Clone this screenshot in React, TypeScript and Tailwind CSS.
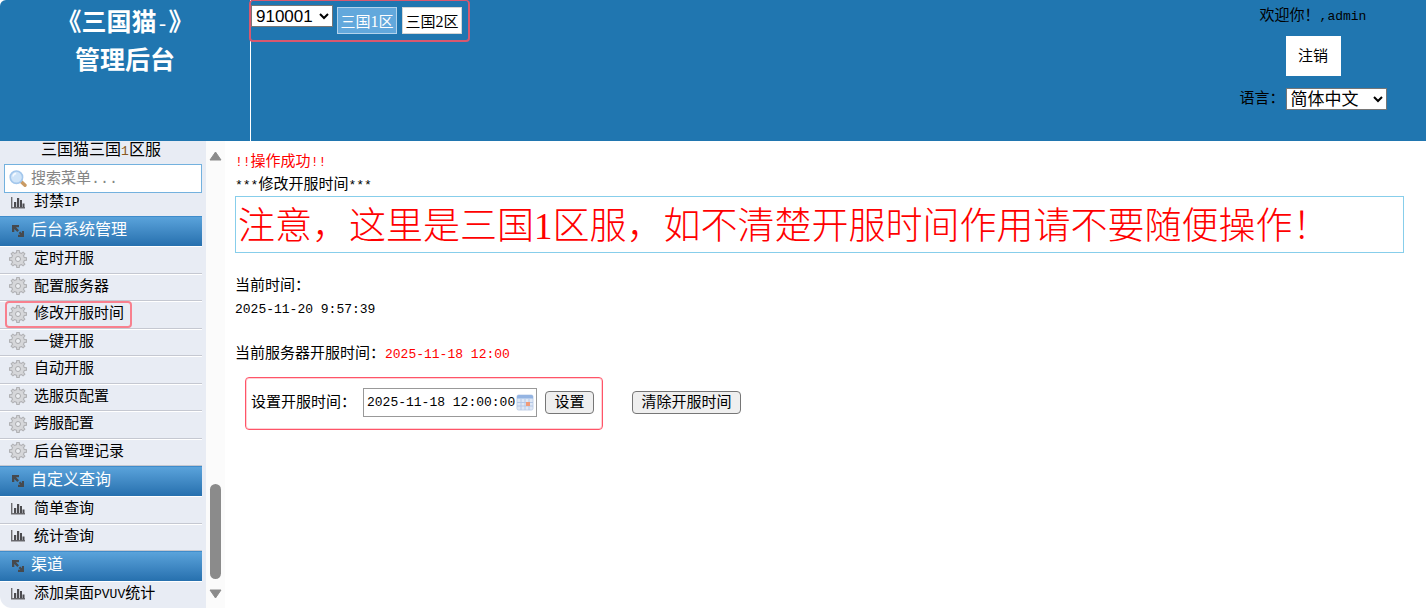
import React, { useState } from "react";

type IconKind = "chart" | "gear";

interface MenuItem {
  label: React.ReactNode;
  icon: IconKind;
  marked?: boolean;
}

interface MenuGroup {
  title: string;
  items: MenuItem[];
}

const groups: MenuGroup[] = [
  {
    title: "后台系统管理",
    items: [
      { label: "定时开服", icon: "gear" },
      { label: "配置服务器", icon: "gear" },
      { label: "修改开服时间", icon: "gear", marked: true },
      { label: "一键开服", icon: "gear" },
      { label: "自动开服", icon: "gear" },
      { label: "选服页配置", icon: "gear" },
      { label: "跨服配置", icon: "gear" },
      { label: "后台管理记录", icon: "gear" },
    ],
  },
  {
    title: "自定义查询",
    items: [
      { label: "简单查询", icon: "chart" },
      { label: "统计查询", icon: "chart" },
    ],
  },
  {
    title: "渠道",
    items: [
      {
        label: (
          <>
            添加桌面<span className="text-[13px]">PVUV</span>统计
          </>
        ),
        icon: "chart",
      },
    ],
  },
];

const teeth = [0, 45, 90, 135, 180, 225, 270, 315];

const GearIcon = () => (
  <svg className="w-[18px] h-[18px]" viewBox="0 0 18 18">
    {teeth.map((angle) => (
      <path
        key={angle}
        d="M6.7 4L7.3 0h3.4l.6 4z"
        fill="#b0b1b4"
        transform={`rotate(${angle} 9 9)`}
      />
    ))}
    <circle cx="9" cy="9" r="6.9" fill="#b0b1b4" />
    {teeth.map((angle) => (
      <path
        key={angle}
        d="M7.8 4L8.2 1h1.6l.4 3z"
        fill="#d2d3d6"
        transform={`rotate(${angle} 9 9)`}
      />
    ))}
    <circle cx="9" cy="9" r="5.9" fill="#d6d7da" />
    <circle cx="9" cy="9" r="2.5" fill="#eceef2" stroke="#aaabae" />
  </svg>
);

const ChartIcon = () => (
  <svg className="w-[14px] h-[12px] mx-0.5" viewBox="0 0 14 12">
    <path d="M.7 0v10.800H14" fill="none" stroke="#6c6c70" strokeWidth="1.4" />
    <path
      d="M3 5h2.200v5.200H3zM6 1h2.200v9.200H6zM9 3h2v7.200H9zM11.500 6.500h2v3.700h-2z"
      fill="#4c4c50"
    />
  </svg>
);

const ArrowsIcon = () => (
  <svg className="w-[14px] h-[14px] mx-0.5" viewBox="0 0 14 14">
    <path d="M1 1h7v2.300H5l3 3L6.300 8l-3-3v3H1z" fill="#46494d" />
    <path
      d="M13 13H7v-2.200h2.300L7.600 9l1.600-1.600 1.700 1.800V7H13z"
      fill="#46494d"
    />
  </svg>
);

const SearchIcon = () => (
  <svg className="w-[18px] h-[18px] shrink-0" viewBox="0 0 18 18">
    <path
      d="M12 11.500l4 3.800"
      stroke="#c99a63"
      strokeWidth="3.4"
      strokeLinecap="round"
    />
    <circle cx="7.4" cy="7.2" r="6.2" fill="#cfe4f8" stroke="#a3c7ec" strokeWidth="1.6" />
    <path d="M4 6.500a3.600 3.600 0 013.200-3" fill="none" stroke="#f5faff" strokeWidth="1.5" />
  </svg>
);

const CalendarIcon = () => (
  <svg className="w-[18px] h-[17px]" viewBox="0 0 18 17">
    <rect x="1" y="1" width="16" height="15" rx="1.5" fill="#dfe8f6" stroke="#c3d2ea" />
    <path d="M1 2.500A1.500 1.500 0 012.500 1h13A1.500 1.500 0 0117 2.500V4.500H1z" fill="#94b4e2" />
    <path d="M1 8.500h16M1 12h16M5 5v11M9 5v11M13 5v11" stroke="#b5c8e6" />
    <rect x="10" y="8" width="4" height="4" fill="#f09a78" />
  </svg>
);

const MenuRow: React.FC<{ item: MenuItem }> = ({ item }) => (
  <li className="relative odd:h-7 even:h-[27px] border-t border-t-white border-b border-b-[#c5c8d1]">
    <a href="#" className="flex items-center h-full pl-[9px] pb-[3px] gap-[7px]">
      {item.icon === "gear" ? <GearIcon /> : <ChartIcon />}
      <span className="pt-[3px]">{item.label}</span>
    </a>
    {item.marked && (
      <span className="absolute left-[5px] -top-px w-[127px] h-[27px] border-2 border-[#f8808e] rounded pointer-events-none" />
    )}
  </li>
);

const App: React.FC = () => {
  const [zone, setZone] = useState(1);
  const [keyword, setKeyword] = useState("");
  const [openTime, setOpenTime] = useState("2025-11-18 12:00:00");

  return (
    <div className="h-screen flex flex-col overflow-hidden bg-white text-black text-[15px] leading-6 font-['Liberation_Mono','Noto_Sans_CJK_SC',monospace]">
      <header className="flex shrink-0 h-[141px] bg-[#2076b0] rounded-tl-md">
        <h1 className="w-[250px] shrink-0 pt-1.5 text-center text-white text-[25px] leading-[38px] font-bold">
          《三国猫<span className="text-xl font-normal">-</span>》
          <br />
          管理后台
        </h1>

        {/* Выбор сервера */}
        <div className="flex-1 border-l border-white">
          <div className="flex items-start w-[221px] h-[42px] -ml-0.5 pt-1 border-2 border-t border-[#d8586f] rounded-sm">
            <select
              aria-label="服务器"
              className="w-[82px] h-[22px] bg-white border border-[#767676] text-[17px] leading-5 font-['Liberation_Sans',sans-serif]"
            >
              <option>910001</option>
            </select>
            <div className="flex gap-[5px] ml-1 mt-0.5">
              {[1, 2].map((n) => (
                <button
                  key={n}
                  onClick={() => setZone(n)}
                  className={
                    zone === n
                      ? "w-[60px] h-[27px] pt-0.5 leading-6 border border-[#b3d3ec] bg-[#62a8dc] text-white"
                      : "w-[60px] h-[27px] pt-0.5 leading-6 border border-[#d5d5d5] bg-white text-black"
                  }
                >
                  三国
                  <span className="text-base font-['Liberation_Serif',serif]">
                    {n}
                  </span>
                  区
                </button>
              ))}
            </div>
          </div>
        </div>

        <div className="w-[226px] shrink-0 flex flex-col items-center pt-[5px]">
          <p>
            欢迎你！<span className="text-[13px]">,admin</span>
          </p>
          <button className="mt-[7px] w-[55px] h-10 pt-1 bg-white">注销</button>
          <div className="flex items-center mt-[10px]">
            <label htmlFor="lang" className="w-[46px] pt-0.5">
              语言：
            </label>
            <select
              id="lang"
              className="w-[101px] h-[22px] bg-white border border-[#767676] text-[17px] leading-5 font-['Liberation_Sans','Noto_Sans_CJK_SC',sans-serif]"
            >
              <option>简体中文</option>
            </select>
          </div>
        </div>
      </header>

      <div className="flex flex-1 min-h-0">
        {/* Боковое меню */}
        <aside className="w-[206px] shrink-0 flex flex-col bg-[#e8ecf4] rounded-bl-xl overflow-hidden">
          <p className="h-[23px] pr-1 text-center text-base leading-5">
            三国猫三国<span className="text-[13px] text-[#8a5a20]">1</span>区服
          </p>
          <div className="shrink-0 flex items-center gap-1 h-[29px] mx-1 px-1 bg-white border border-[#73b1de]">
            <SearchIcon />
            <input
              type="text"
              aria-label="搜索菜单"
              placeholder="搜索菜单..."
              value={keyword}
              onChange={(e) => setKeyword(e.target.value)}
              className="w-full min-w-0 pt-0.5 outline-none placeholder:text-[#858585]"
            />
          </div>
          <nav className="flex-1 min-h-0 mr-1 overflow-hidden">
            <a
              href="#"
              className="flex items-center h-[23px] pl-[9px] pb-[3px] gap-[7px] leading-4"
            >
              <ChartIcon />
              <span>
                封禁<span className="text-[13px]">IP</span>
              </span>
            </a>
            {groups.map((group) => (
              <section key={group.title}>
                <h2 className="flex items-center gap-1 h-[30px] pl-[9px] pb-0.5 border-t border-[#3f8ccb] bg-linear-to-b from-[#5aa3db] to-[#2670ae] text-base text-white">
                  <ArrowsIcon />
                  {group.title}
                </h2>
                <ul>
                  {group.items.map((item, i) => (
                    <MenuRow key={i} item={item} />
                  ))}
                </ul>
              </section>
            ))}
          </nav>
        </aside>

        <div className="w-[19px] shrink-0 flex flex-col items-center pt-[10px] pb-[9px] bg-[#fbfbfb]">
          <svg className="w-[13px] h-[10px]" viewBox="0 0 13 10">
            <path d="M6.5 1L12 9H1z" fill="#8b8b8b" stroke="#8b8b8b" strokeLinejoin="round" />
          </svg>
          <div className="flex-1" />
          <div className="w-[11px] h-[95px] mb-[10px] rounded-full bg-[#8b8b8b]" />
          <svg className="w-[13px] h-[10px]" viewBox="0 0 13 10">
            <path d="M6.5 9L12 1H1z" fill="#8b8b8b" stroke="#8b8b8b" strokeLinejoin="round" />
          </svg>
        </div>

        <main className="flex-1 min-w-0 pt-[10px] pl-[10px] pr-[22px]">
          <p className="text-[#ff0000]">
            <span className="text-[13px]">!!</span>操作成功
            <span className="text-[13px]">!!</span>
          </p>
          <p className="leading-[21px]">
            <span className="text-[13px]">***</span>修改开服时间
            <span className="text-[13px]">***</span>
          </p>
          <div className="h-[57px] px-0.5 border border-[#87ceeb] text-[37px] leading-[60px] font-light text-[#ff0000] whitespace-nowrap">
            注意，这里是三国
            <span className="font-normal font-['Liberation_Serif',serif]">1</span>
            区服，如不清楚开服时间作用请不要随便操作！
          </div>

          <p className="mt-[22px]">当前时间：</p>
          <p className="text-[13px] leading-[22px]">2025-11-20 9:57:39</p>
          <p className="mt-[22px]">
            当前服务器开服时间：
            <span className="text-[13px] text-[#ff0000]">2025-11-18 12:00</span>
          </p>

          <div className="flex items-center mt-[10px] ml-[10px]">
            <div className="flex items-center h-[53px] w-[358px] pl-[5px] pb-0.5 border border-[#ff5468] ring-1 ring-inset ring-[#ffd0d5] rounded">
              <label htmlFor="openTime" className="w-28 pt-0.5">
                设置开服时间：
              </label>
              <div className="relative w-[174px]">
                <input
                  id="openTime"
                  type="text"
                  value={openTime}
                  onChange={(e) => setOpenTime(e.target.value)}
                  className="w-full h-[29px] px-[3px] border border-[#999999] bg-white text-[13px]"
                />
                <span className="absolute right-[3px] top-1.5">
                  <CalendarIcon />
                </span>
              </div>
              <button className="ml-2 w-[49px] h-[23px] pt-0.5 leading-5 bg-[#efefef] border border-[#767676] rounded-sm">
                设置
              </button>
            </div>
            <button className="ml-[29px] mb-0.5 w-[109px] h-[23px] pt-0.5 leading-5 bg-[#efefef] border border-[#767676] rounded-sm">
              清除开服时间
            </button>
          </div>
        </main>
      </div>
    </div>
  );
};

export default App;
